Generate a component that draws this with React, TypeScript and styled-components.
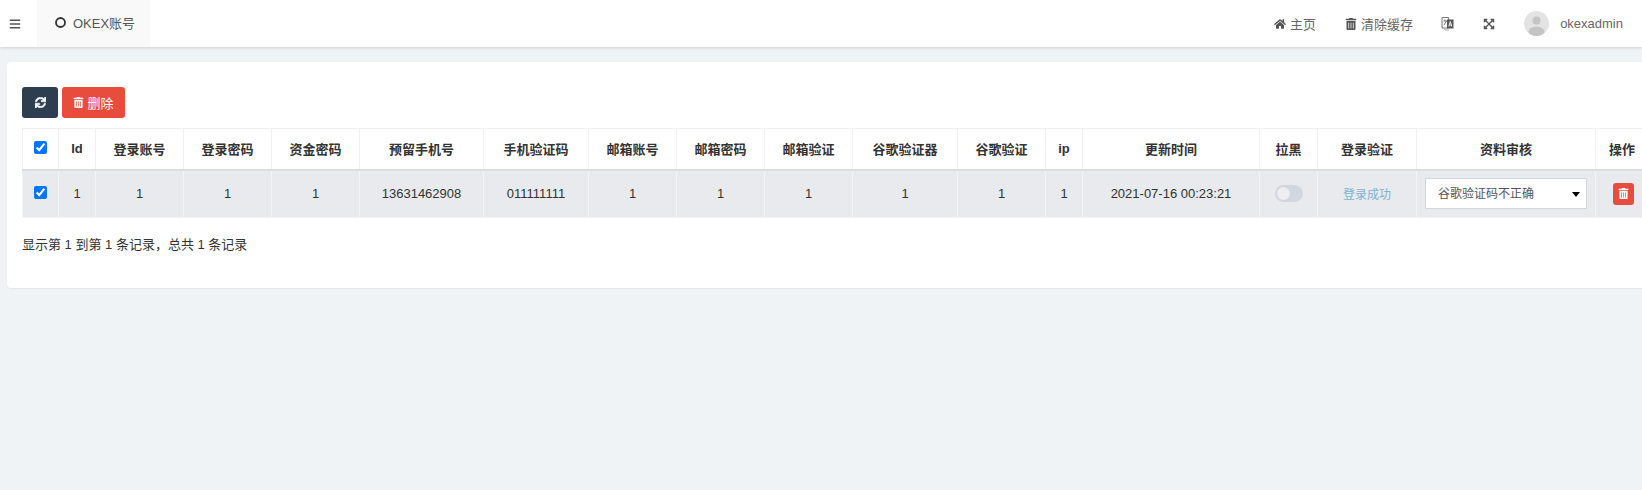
import { FunctionComponent } from "react";
import styled, { createGlobalStyle } from "styled-components";
import {
  FaBars,
  FaExpandArrowsAlt,
  FaHome,
  FaSync,
  FaTrashAlt,
} from "react-icons/fa";

const GlobalStyle = createGlobalStyle`
  html, body {
    margin: 0;
    height: 100%;
    overflow: hidden;
    background: #eff3f6;
    font-family: "Liberation Sans", "Noto Sans CJK SC", sans-serif;
    font-size: 13px;
    color: #333;
  }
`;

const Nav = styled.header`
  height: 47px;
  background: #fff;
  box-shadow: 0 1px 3px rgba(0, 0, 0, 0.14);
  display: flex;
  align-items: center;
  position: relative;
`;
const MenuToggle = styled.a`
  width: 37px;
  padding-left: 9px;
  box-sizing: border-box;
  color: #555;
  font-size: 12px;
  display: flex;
`;
const Tab = styled.div`
  width: 113px;
  height: 47px;
  background: #f9f9f9;
  display: flex;
  align-items: center;
  padding-left: 18px;
  box-sizing: border-box;
  gap: 7px;
  color: #555;
  font-size: 13px;
  padding-bottom: 3px;
`;
const NavRight = styled.nav`
  margin-left: auto;
  display: flex;
  align-items: center;
  padding-right: 19px;
  color: #666;
`;
const NavLink = styled.a<{ $gap?: number }>`
  display: flex;
  align-items: center;
  gap: 4px;
  margin-right: ${(p) => p.$gap ?? 29}px;
  svg {
    font-size: 12px;
    color: #555;
  }
`;
const Avatar = styled.svg`
  width: 25px;
  height: 25px;
  border-radius: 50%;
  margin-right: 11px;
`;
const UserName = styled.span`
  font-size: 13px;
  color: #666;
`;

const Main = styled.main`
  padding: 15px 0 0 7px;
`;
const Card = styled.section`
  width: 1700px;
  height: 226px;
  box-sizing: border-box;
  padding: 25px 15px 0;
  background: #fff;
  border-radius: 4px;
  box-shadow: 0 1px 1px rgba(0, 0, 0, 0.05);
`;
const Toolbar = styled.div`
  display: flex;
  gap: 4px;
  margin-bottom: 10px;
`;
const ToolButton = styled.button<{ $bg: string; $width: number }>`
  width: ${(p) => p.$width}px;
  height: 31px;
  border: 0;
  border-radius: 3px;
  padding: 0;
  background: ${(p) => p.$bg};
  color: #fff;
  font: inherit;
  display: flex;
  align-items: center;
  justify-content: center;
  gap: 3px;
  svg {
    font-size: 11px;
  }
`;
const RefreshIcon = styled(FaSync)`
  stroke: currentColor;
  stroke-width: 24px;
`;
const Table = styled.table`
  table-layout: fixed;
  width: 1626px;
  border-collapse: collapse;
  text-align: center;
`;
const Th = styled.th`
  height: 41px;
  padding: 0;
  box-sizing: border-box;
  font-size: 13px;
  font-weight: 700;
  color: #333;
  border: 1px solid #f0f0f0;
  border-bottom: 2px solid #ddd;
  background: #fff;
`;
const Td = styled.td`
  height: 48px;
  padding: 0;
  box-sizing: border-box;
  background: #e8eaed;
  border: 1px solid #f2f3f4;
  color: #333;
  font-size: 13px;
`;
const Check = styled.input.attrs({ type: "checkbox" })`
  width: 13px;
  height: 13px;
  margin: 0 0 3px;
  vertical-align: middle;
`;
const Switch = styled.span`
  display: inline-block;
  vertical-align: middle;
  width: 28px;
  height: 17px;
  border-radius: 9px;
  background: #d2d6de;
  position: relative;
  &::after {
    content: "";
    position: absolute;
    left: 2px;
    top: 2px;
    width: 13px;
    height: 13px;
    border-radius: 50%;
    background: #eceef1;
  }
`;
const StatusText = styled.span`
  color: #7db3d3;
  font-size: 12px;
`;
const SelectWrap = styled.div`
  position: relative;
  width: 162px;
  height: 31px;
  margin-left: 8px;
  &::after {
    content: "";
    position: absolute;
    right: 7px;
    top: 14px;
    border: 4px solid transparent;
    border-top: 5px solid #000;
    border-bottom: 0;
  }
`;
const Select = styled.select`
  appearance: none;
  width: 100%;
  height: 100%;
  box-sizing: border-box;
  border: 1px solid #d2d6de;
  border-radius: 0;
  background: #fff;
  padding: 0 12px;
  color: #555;
  font: 12px "Liberation Sans", "Noto Sans CJK SC", sans-serif;
`;
const DeleteButton = styled.button`
  width: 21px;
  height: 22px;
  border: 0;
  border-radius: 3px;
  background: #e74c3c;
  color: #fff;
  padding: 0;
  margin: 0 0 0 17px;
  display: flex;
  align-items: center;
  justify-content: center;
  svg {
    font-size: 11px;
  }
`;
const Summary = styled.div`
  margin-top: 18px;
  font-size: 13px;
  line-height: 18px;
  color: #333;
`;

const TabIcon: FunctionComponent = () => (
  <svg width="11" height="11" viewBox="0 0 11 11">
    <circle cx="5.5" cy="5.5" r="4.5" fill="none" stroke="#333" strokeWidth="1.8" />
  </svg>
);

const LanguageIcon: FunctionComponent = () => (
  <svg width="13" height="15" viewBox="0 0 13 15">
    <path d="M1 1.5h6.5v10.5H1z" fill="#fff" stroke="#777" strokeWidth="1" />
    <path d="M6 3.5h6.5v9H6z" fill="#555" />
    <path d="M2.5 5h3.5M4 3.5v1.5M3 9l2.5-4" fill="none" stroke="#666" strokeWidth="0.9" />
    <path d="M7.8 10.5l1.5-5 1.5 5M8.4 9h1.8" fill="none" stroke="#fff" strokeWidth="0.9" />
    <path d="M3 12.5l1 1.5h4" fill="none" stroke="#999" strokeWidth="0.8" />
  </svg>
);

const columns: { title: string; width: number; value: string }[] = [
  { title: "Id", width: 37, value: "1" },
  { title: "登录账号", width: 88, value: "1" },
  { title: "登录密码", width: 88, value: "1" },
  { title: "资金密码", width: 88, value: "1" },
  { title: "预留手机号", width: 124, value: "13631462908" },
  { title: "手机验证码", width: 105, value: "011111111" },
  { title: "邮箱账号", width: 88, value: "1" },
  { title: "邮箱密码", width: 88, value: "1" },
  { title: "邮箱验证", width: 88, value: "1" },
  { title: "谷歌验证器", width: 105, value: "1" },
  { title: "谷歌验证", width: 88, value: "1" },
  { title: "ip", width: 37, value: "1" },
  { title: "更新时间", width: 177, value: "2021-07-16 00:23:21" },
];

const App: FunctionComponent = () => {
  return (
    <>
      <GlobalStyle />
      <Nav>
        <MenuToggle>
          <FaBars />
        </MenuToggle>
        <Tab>
          <TabIcon />
          OKEX账号
        </Tab>
        <NavRight>
          <NavLink>
            <FaHome />
            主页
          </NavLink>
          <NavLink $gap={28}>
            <FaTrashAlt />
            清除缓存
          </NavLink>
          <NavLink>
            <LanguageIcon />
          </NavLink>
          <NavLink $gap={29}>
            <FaExpandArrowsAlt />
          </NavLink>
          <Avatar viewBox="0 0 25 25">
            <rect width="25" height="25" fill="#e3e3e3" />
            <circle cx="12.5" cy="9.5" r="4" fill="#c4c4c4" />
            <ellipse cx="12.5" cy="21" rx="8" ry="5.5" fill="#c4c4c4" />
          </Avatar>
          <UserName>okexadmin</UserName>
        </NavRight>
      </Nav>
      <Main>
        <Card>
          <Toolbar>
            <ToolButton $bg="#2c3e50" $width={36}>
              <RefreshIcon />
            </ToolButton>
            <ToolButton $bg="#e74c3c" $width={63}>
              <FaTrashAlt />
              删除
            </ToolButton>
          </Toolbar>
          <Table>
            <colgroup>
              <col width={36} />
              {columns.map((c) => (
                <col key={c.title} width={c.width} />
              ))}
              <col width={58} />
              <col width={99} />
              <col width={179} />
              <col width={53} />
            </colgroup>
            <thead>
              <tr>
                <Th>
                  <Check defaultChecked />
                </Th>
                {columns.map((c) => (
                  <Th key={c.title}>{c.title}</Th>
                ))}
                <Th>拉黑</Th>
                <Th>登录验证</Th>
                <Th>资料审核</Th>
                <Th>操作</Th>
              </tr>
            </thead>
            <tbody>
              <tr>
                <Td>
                  <Check defaultChecked />
                </Td>
                {columns.map((c) => (
                  <Td key={c.title}>{c.value}</Td>
                ))}
                <Td>
                  <Switch />
                </Td>
                <Td>
                  <StatusText>登录成功</StatusText>
                </Td>
                <Td>
                  <SelectWrap>
                    <Select defaultValue="谷歌验证码不正确">
                      <option>谷歌验证码不正确</option>
                      <option>手机验证码不正确</option>
                      <option>资料审核通过</option>
                    </Select>
                  </SelectWrap>
                </Td>
                <Td>
                  <DeleteButton>
                    <FaTrashAlt />
                  </DeleteButton>
                </Td>
              </tr>
            </tbody>
          </Table>
          <Summary>显示第 1 到第 1 条记录，总共 1 条记录</Summary>
        </Card>
      </Main>
    </>
  );
};

export default App;
